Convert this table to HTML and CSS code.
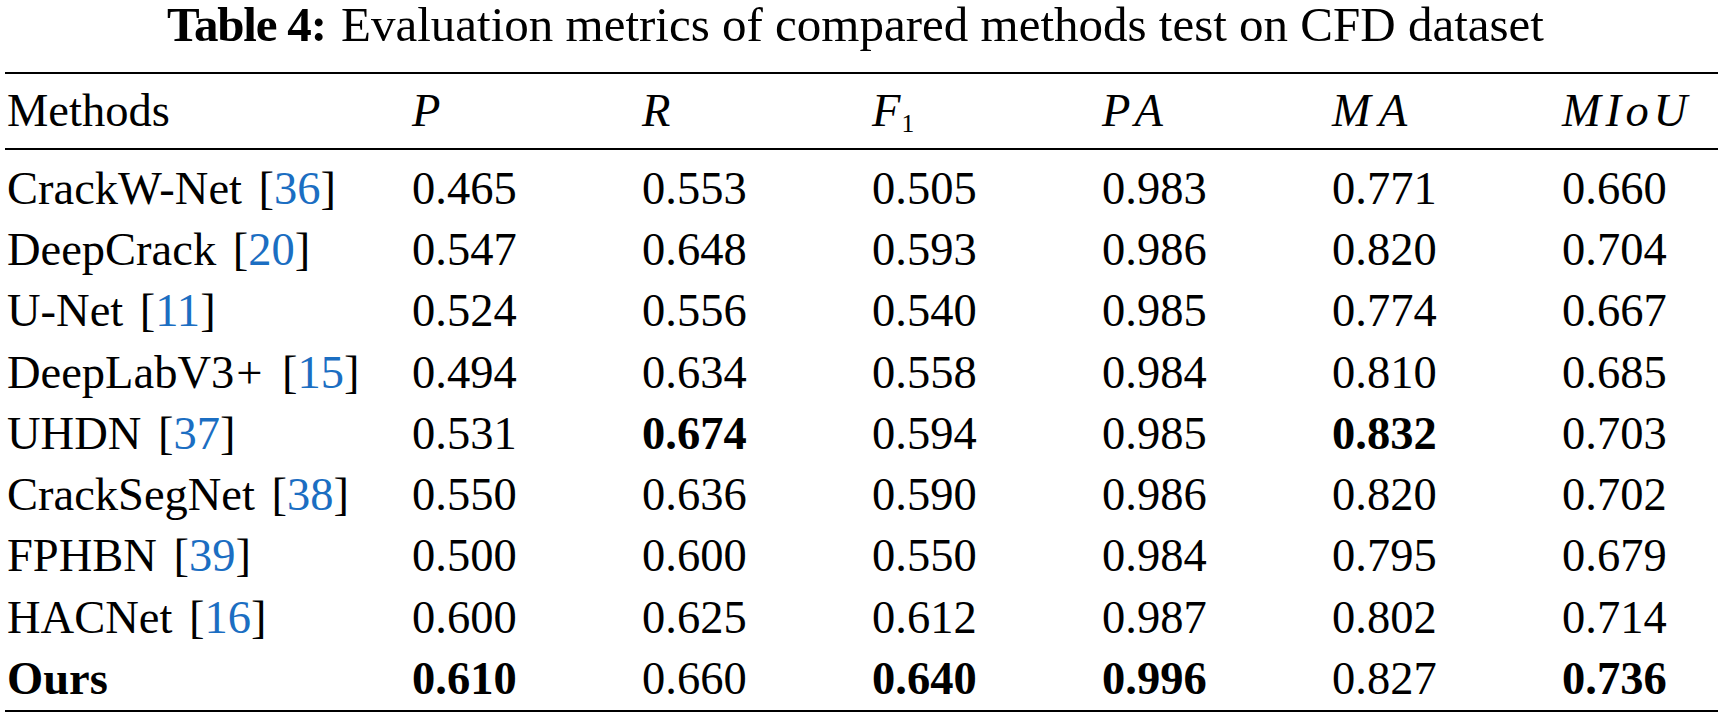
FILE: index.html
```html
<!DOCTYPE html>
<html>
<head>
<meta charset="utf-8">
<link rel="stylesheet" href="styles.css">
</head>
<body>
<div class="page">
  <div class="caption"><b class="cap-label">Table 4:</b> Evaluation metrics of compared methods test on CFD dataset</div>
  <table class="metrics">
    <colgroup>
      <col class="c-name"><col class="c-num"><col class="c-num"><col class="c-num"><col class="c-num"><col class="c-num"><col class="c-last">
    </colgroup>
    <thead>
      <tr>
        <th class="name">Methods</th>
        <th><i>P</i></th>
        <th><i>R</i></th>
        <th><i>F</i><sub class="sub">1</sub></th>
        <th><i class="pa">PA</i></th>
        <th><i class="ma">MA</i></th>
        <th><i class="miou">MIoU</i></th>
      </tr>
    </thead>
    <tbody>
      <tr class="first"><td class="name">CrackW-Net <span class="cite">[<span class="ref">36</span>]</span></td><td>0.465</td><td>0.553</td><td>0.505</td><td>0.983</td><td>0.771</td><td>0.660</td></tr>
      <tr><td class="name">DeepCrack <span class="cite">[<span class="ref">20</span>]</span></td><td>0.547</td><td>0.648</td><td>0.593</td><td>0.986</td><td>0.820</td><td>0.704</td></tr>
      <tr><td class="name">U-Net <span class="cite">[<span class="ref">11</span>]</span></td><td>0.524</td><td>0.556</td><td>0.540</td><td>0.985</td><td>0.774</td><td>0.667</td></tr>
      <tr><td class="name">DeepLabV3<span class="plus">+</span> <span class="cite">[<span class="ref">15</span>]</span></td><td>0.494</td><td>0.634</td><td>0.558</td><td>0.984</td><td>0.810</td><td>0.685</td></tr>
      <tr><td class="name">UHDN <span class="cite">[<span class="ref">37</span>]</span></td><td>0.531</td><td class="best">0.674</td><td>0.594</td><td>0.985</td><td class="best">0.832</td><td>0.703</td></tr>
      <tr><td class="name">CrackSegNet <span class="cite">[<span class="ref">38</span>]</span></td><td>0.550</td><td>0.636</td><td>0.590</td><td>0.986</td><td>0.820</td><td>0.702</td></tr>
      <tr><td class="name">FPHBN <span class="cite">[<span class="ref">39</span>]</span></td><td>0.500</td><td>0.600</td><td>0.550</td><td>0.984</td><td>0.795</td><td>0.679</td></tr>
      <tr><td class="name">HACNet <span class="cite">[<span class="ref">16</span>]</span></td><td>0.600</td><td>0.625</td><td>0.612</td><td>0.987</td><td>0.802</td><td>0.714</td></tr>
      <tr class="last"><td class="name best">Ours</td><td class="best">0.610</td><td>0.660</td><td class="best">0.640</td><td class="best">0.996</td><td>0.827</td><td class="best">0.736</td></tr>
    </tbody>
  </table>
</div>
</body>
</html>
```
FILE: styles.css
```css
html, body {
  margin: 0;
  padding: 0;
  background: #ffffff;
}

.page {
  padding: 0 3px 0 5px;
  font-family: "Liberation Serif", "Times New Roman", serif;
  color: #000000;
}

.caption {
  text-align: center;
  font-size: 49px;
  line-height: 50px;
  margin-bottom: 22px;
  padding-right: 12px;
  white-space: nowrap;
}

.cap-label {
  font-weight: bold;
  letter-spacing: -1.2px;
  margin-right: 3px;
}

.metrics {
  width: 1713px;
  table-layout: fixed;
  border-collapse: separate;
  border-spacing: 0;
  border-top: 2px solid #000;
  border-bottom: 2px solid #000;
  font-size: 46.5px;
  line-height: 61.3px;
}

.c-name { width: 407px; }
.c-num { width: 230px; }
.c-last { width: 156px; }

.metrics th,
.metrics td {
  padding: 0;
  text-align: left;
  font-weight: normal;
  white-space: nowrap;
}

.metrics th {
  line-height: 60px;
  padding-top: 7px;
  padding-bottom: 7px;
  border-bottom: 2px solid #000;
}

.metrics .name {
  padding-left: 2px;
}

.metrics tr.first td {
  padding-top: 7.7px;
}

.metrics tr.last td {
  padding-bottom: 1px;
}

.metrics .best {
  font-weight: bold;
}

.cite {
  margin-left: 5px;
}

.plus {
  margin-left: 2px;
  margin-right: 3px;
}

.ref {
  color: #1b6ec2;
}

.sub {
  font-size: 0.55em;
  font-style: normal;
  vertical-align: -0.25em;
  line-height: 0;
  margin-left: 1px;
}

.pa {
  letter-spacing: 10px;
}

.ma {
  letter-spacing: 8px;
}

.miou {
  letter-spacing: 0.1em;
}
```
